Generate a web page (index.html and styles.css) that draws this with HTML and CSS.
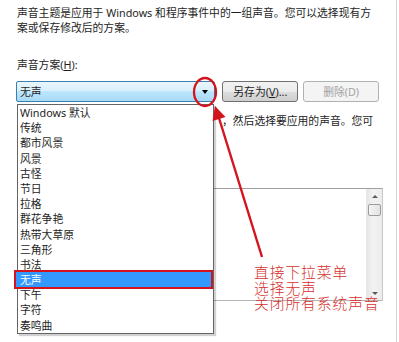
FILE: index.html
```html
<!DOCTYPE html>
<html lang="zh-CN">
<head>
<meta charset="utf-8">
<title>声音方案</title>
<link rel="stylesheet" href="styles.css">
</head>
<body>
<div class="page">
  <p class="intro">声音主题是应用于 Windows 和程序事件中的一组声音。您可以选择现有方<br>案或保存修改后的方案。</p>
  <div class="label">声音方案(<u>H</u>):</div>
  <div class="row">
    <div class="combo">
      <span class="combo-text">无声</span>
      <span class="combo-arrow"></span>
    </div>
    <button class="btn">另存为(<u>V</u>)...</button>
    <button class="btn disabled">删除(D)</button>
  </div>
  <p class="hint">，然后选择要应用的声音。您可</p>
  <div class="events">
    <div class="events-body"></div>
    <div class="vscroll">
      <span class="sc-up"></span>
      <span class="sc-thumb"></span>
      <span class="sc-fill"></span>
      <span class="sc-down"></span>
    </div>
  </div>

  <ul class="dropdown">
    <li>Windows 默认</li>
    <li>传统</li>
    <li>都市风景</li>
    <li>风景</li>
    <li>古怪</li>
    <li>节日</li>
    <li>拉格</li>
    <li>群花争艳</li>
    <li>热带大草原</li>
    <li>三角形</li>
    <li>书法</li>
    <li class="selected">无声</li>
    <li>下午</li>
    <li>字符</li>
    <li>奏鸣曲</li>
  </ul>

  <svg class="annot" width="399" height="342" viewBox="0 0 399 342">
    <ellipse cx="205" cy="92" rx="11" ry="14" fill="none" stroke="#d4141c" stroke-width="2.3"/>
    <line x1="262" y1="257" x2="219" y2="118" stroke="#d4141c" stroke-width="2.4"/>
    <polygon points="215,106 212.5,121 225.5,117" fill="#d4141c"/>
  </svg>

  <div class="note">直接下拉菜单<br>选择无声<br>关闭所有系统声音</div>
</div>
</body>
</html>
```

FILE: styles.css
```css
* { box-sizing: border-box; }

html, body {
  margin: 0;
  padding: 0;
  background: #ffffff;
}

.page {
  position: relative;
  width: 397px;
  height: 342px;
  overflow: hidden;
  padding: 0 17px;
  font-family: "Noto Sans", "Noto Sans CJK SC", sans-serif;
  font-size: 10.8px;
  color: #1e1e1e;
  background: #fff;
  border-right: 1px solid #d4d4d4;
}

.intro {
  margin: 0;
  padding-top: 5px;
  line-height: 15px;
  white-space: nowrap;
}

.label {
  margin-top: 22px;
  line-height: 15px;
}

.label u { text-decoration: underline; }

.row {
  display: flex;
  align-items: stretch;
  margin-top: 9px;
  margin-left: -1px;
  height: 21px;
}

.combo {
  width: 200px;
  display: flex;
  align-items: center;
  justify-content: space-between;
  border: 1px solid #3c7fb1;
  border-radius: 2px;
  background: linear-gradient(#eaf6fd 0%, #d9f0fc 45%, #bee6fd 50%, #a7d9f5 100%);
  padding: 0 6px 0 3px;
}

.combo-text { line-height: 15px; }

.combo-arrow {
  width: 0;
  height: 0;
  border-left: 3.5px solid transparent;
  border-right: 3.5px solid transparent;
  border-top: 4px solid #000;
}

.btn {
  width: 76px;
  margin-left: 7px;
  font: inherit;
  color: #1e1e1e;
  border: 1px solid #707070;
  border-radius: 3px;
  background: linear-gradient(#f2f2f2 0%, #ebebeb 50%, #dddddd 51%, #cfcfcf 100%);
  padding: 0;
  line-height: 15px;
}

.btn + .btn { margin-left: 5px; }

.btn.disabled {
  color: #a3a3a3;
  border-color: #adb2b5;
  background: #f4f4f4;
}

.hint {
  margin: 11px 0 0;
  padding-left: 205px;
  line-height: 15px;
  white-space: nowrap;
}

.events {
  display: flex;
  margin-top: 60px;
  height: 113px;
  width: 366px;
  border: 1px solid #a0a0a0;
  border-right-color: #c8c8c8;
  border-bottom-color: #b4b4b4;
}

.events-body { flex: 1; }

.vscroll {
  width: 16px;
  display: flex;
  flex-direction: column;
  align-items: center;
  background: linear-gradient(90deg, #e6e6e6, #f2f2f2 40%, #ececec);
  border-left: 1px solid #eaeaea;
}

.sc-up, .sc-down {
  width: 0;
  height: 0;
  border-left: 3px solid transparent;
  border-right: 3px solid transparent;
}

.sc-up {
  margin-top: 6px;
  border-bottom: 3px solid #5a5a5a;
}

.sc-down {
  margin-bottom: 5px;
  border-top: 3px solid #5a5a5a;
}

.sc-thumb {
  margin-top: 6px;
  width: 13px;
  height: 12px;
  border: 1px solid #9c9c9c;
  border-radius: 2px;
  background: linear-gradient(90deg, #f4f4f4, #e2e2e2);
}

.sc-fill { flex: 1; }

.dropdown {
  position: absolute;
  left: 17px;
  top: 104px;
  width: 197px;
  margin: 0;
  padding: 0;
  list-style: none;
  background: #fff;
  border: 1px solid #646464;
  box-shadow: 2px 2px 1px rgba(0, 0, 0, 0.18);
  z-index: 2;
}

.dropdown li {
  height: 15.2px;
  line-height: 15.2px;
  padding-left: 2px;
  white-space: nowrap;
}

.dropdown li.selected {
  background: #3399ff;
  color: #fff;
  outline: 2px solid #d3141c;
  outline-offset: 0px;
  margin: 0 2px 0 -2px;
  padding-left: 4px;
}

.annot {
  position: absolute;
  left: 0;
  top: 0;
  z-index: 3;
  pointer-events: none;
}

.note {
  position: absolute;
  left: 254px;
  top: 264px;
  font-family: "Noto Sans CJK SC", sans-serif;
  font-size: 14.8px;
  letter-spacing: 0.9px;
  line-height: 15.6px;
  color: #d6302d;
  font-weight: 300;
  z-index: 3;
}
```
